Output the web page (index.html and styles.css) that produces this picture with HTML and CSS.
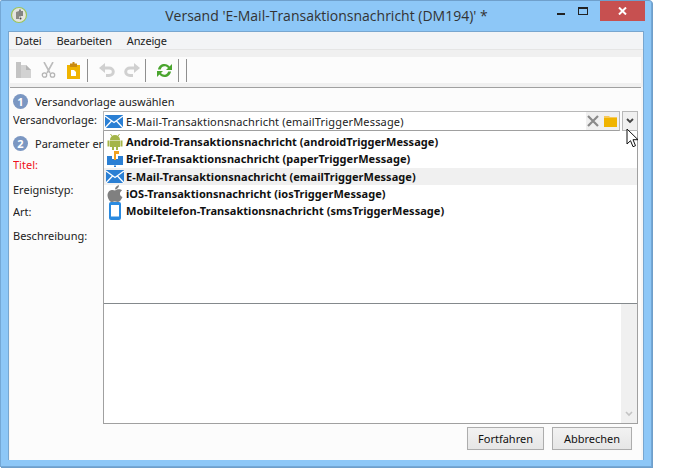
FILE: index.html
```html
<!DOCTYPE html>
<html lang="de">
<head>
<meta charset="utf-8">
<title>Versand</title>
<link rel="stylesheet" href="styles.css">
</head>
<body>
<div class="window">
  <header class="titlebar">
    <svg class="app-icon" width="18" height="18" viewBox="0 0 18 18"><circle cx="9" cy="9" r="7.500" fill="#e4e4df" stroke="#9cc45a" stroke-width="1.200"/><path d="M6 13V6l3-1v8z" fill="#8a8a86"/><path d="M10 3.500v7M12 5v5" stroke="#444" stroke-width="1.200" fill="none"/><circle cx="10.500" cy="12.500" r="1" fill="#444"/></svg>
    <h1 class="title">Versand 'E-Mail-Transaktionsnachricht (DM194)' *</h1>
    <div class="win-controls">
      <span class="win-btn win-min"><svg width="8" height="2" viewBox="0 0 8 2"><rect width="8" height="2" fill="#222"/></svg></span>
      <span class="win-btn win-max"><svg width="10" height="8" viewBox="0 0 10 8"><rect x=".5" y=".5" width="9" height="7" fill="none" stroke="#222"/><rect width="10" height="2" fill="#222"/></svg></span>
      <span class="win-close"><svg width="9" height="8" viewBox="0 0 9 8"><path d="M1 .5l7 7M8 .5l-7 7" stroke="#fff" stroke-width="2"/></svg></span>
    </div>
  </header>
  <div class="client">
    <nav class="menubar"><span>Datei</span><span>Bearbeiten</span><span>Anzeige</span></nav>
    <div class="toolbar-band">
      <div class="toolbar">
        <svg class="t-copy" width="15" height="16" viewBox="0 0 15 16"><path d="M0 0h5v16H0z" fill="#c4c4c4"/><path d="M5 3h5l5 5v8H5z" fill="#d2d2d2"/><path d="M10 3v5h5z" fill="#b4b4b4"/></svg>
        <svg class="t-cut" width="15" height="16" viewBox="0 0 15 16"><path d="M3 0l6 11M12 0L6 11" stroke="#bcbcbc" stroke-width="1.600" fill="none"/><circle cx="3.500" cy="13" r="2.200" fill="none" stroke="#b4b4b4" stroke-width="1.300"/><circle cx="11.500" cy="13" r="2.200" fill="none" stroke="#b4b4b4" stroke-width="1.300"/></svg>
        <svg class="t-paste" width="13" height="17" viewBox="0 0 13 17"><rect y="3" width="13" height="14" fill="#f0b400"/><path d="M3 3V1.500h2.500V0h2v1.500H10V5H3z" fill="#c98a10"/><path d="M4 8h3l2 2v4H4z" fill="#fff"/></svg>
        <span class="t-sep s1"></span>
        <svg class="t-undo" width="16" height="14" viewBox="0 0 16 14"><path d="M6 0v10L0 5z" fill="#d0d0d0"/><path d="M5 5h5a4 3.500 0 0 1 0 7.500H7" fill="none" stroke="#d0d0d0" stroke-width="3"/></svg>
        <svg class="t-redo" width="16" height="14" viewBox="0 0 16 14"><path d="M10 0v10l6-5z" fill="#d0d0d0"/><path d="M11 5H6a4 3.500 0 0 0 0 7.500h3" fill="none" stroke="#d0d0d0" stroke-width="3"/></svg>
        <span class="t-sep s2"></span>
        <svg class="t-refresh" width="15" height="15" viewBox="0 0 15 15"><path d="M1 6.500C1.500 3 4.200 1 7.500 1c2.200 0 3.900 1 5 2.500L15 1v6H9l2-2C10.200 3.800 9 3.300 7.500 3.300 5.800 3.300 4.300 4.500 3.800 6.500z" fill="#4aa52e"/><path d="M14 8.500C13.500 12 10.800 14 7.500 14c-2.200 0-3.900-1-5-2.500L0 14V8h6l-2 2c.8 1.200 2 1.700 3.500 1.700 1.700 0 3.200-1.200 3.700-3.200z" fill="#4aa52e"/></svg>
        <span class="t-sep s3"></span>
        <span class="t-sep s4"></span>
      </div>
    </div>
    <main class="content">
      <div class="step step-first"><span class="badge">1</span><span>Versandvorlage auswählen</span></div>
      <div class="form">
        <div class="labels">
          <div class="lab lab-vorlage">Versandvorlage:</div>
          <div class="step step-second"><span class="badge">2</span><span class="nowrap">Parameter erfassen</span></div>
          <div class="lab lab-titel">Titel:</div>
          <div class="lab lab-typ">Ereignistyp:</div>
          <div class="lab lab-art">Art:</div>
          <div class="lab lab-besch">Beschreibung:</div>
        </div>
        <div class="fields">
          <div class="combo-row">
            <div class="combo">
              <svg class="mail" width="18" height="13" viewBox="0 0 18 13"><rect width="18" height="13" fill="#2a7fd4"/><path d="M0 1l9 6.500L18 1M0 13l6.500-7M18 13l-6.500-7" stroke="#fff" stroke-width="1.300" fill="none"/></svg>
              <span class="combo-text">E-Mail-Transaktionsnachricht (emailTriggerMessage)</span>
              <div class="combo-tools">
                <svg width="12" height="12" viewBox="0 0 12 12"><path d="M1 1l10 10M11 1L1 11" stroke="#8a8a8a" stroke-width="2.200"/></svg>
                <svg width="13" height="11" viewBox="0 0 13 11"><path d="M0 0h5l1 1h7v2H0z" fill="#f7c95a"/><rect y="2" width="13" height="9" fill="#f0b400"/></svg>
              </div>
            </div>
            <div class="drop-btn"><svg width="8" height="6" viewBox="0 0 8 6"><path d="M1 1l3 3 3-3" stroke="#444" stroke-width="1.800" fill="none"/></svg></div>
          </div>
          <div class="pane">
            <ul class="list">
              <li><svg width="16" height="16" viewBox="0 0 16 16"><path d="M3 6a5 5 0 0 1 10 0z" fill="#a4b548"/><rect x="3" y="6.500" width="10" height="6.500" fill="#a4b548"/><rect x="0.500" y="6.500" width="2" height="6" fill="#a4b548"/><rect x="13.500" y="6.500" width="2" height="6" fill="#a4b548"/><rect x="5" y="13" width="2" height="3" fill="#a4b548"/><rect x="9" y="13" width="2" height="3" fill="#a4b548"/><path d="M5 2L3.500 0M11 2l1.500-2" stroke="#a4b548"/></svg>Android-Transaktionsnachricht (androidTriggerMessage)</li>
              <li><svg width="16" height="16" viewBox="0 0 16 16"><path d="M0 5h5v9H0zM11 5h5v9h-5zM5 8h6v6H5z" fill="#2a7fd4"/><path d="M7 0h5v3H9v6H7z" fill="#f0a020"/><rect x="7" y="14.500" width="2" height="1.500" fill="#2a7fd4"/></svg>Brief-Transaktionsnachricht (paperTriggerMessage)</li>
              <li class="selected"><svg width="18" height="13" viewBox="0 0 18 13"><rect width="18" height="13" fill="#2a7fd4"/><path d="M0 1l9 6.500L18 1M0 13l6.500-7M18 13l-6.500-7" stroke="#fff" stroke-width="1.300" fill="none"/></svg>E-Mail-Transaktionsnachricht (emailTriggerMessage)</li>
              <li><svg width="16" height="17" viewBox="0 0 16 17"><path d="M8 5.500C6.500 4.500 1 4 .5 10c0 3.500 2.500 7 4 7 1 0 2.500-.6 3.500-.6s2 .6 3 .6c1.500 0 3.500-2.500 4.500-5-3-1-3.500-5-.5-6.500-2-2-5-1-7 0z" fill="#808080"/><path d="M8 4.500c0-2 1.500-4 4-4.500 0 2.500-1.500 4-4 4.500z" fill="#808080"/></svg>iOS-Transaktionsnachricht (iosTriggerMessage)</li>
              <li><svg width="16" height="18" viewBox="0 0 16 18"><rect x="2" y="0" width="12" height="18" rx="2" fill="#2a8ae0"/><rect x="4" y="3" width="8" height="11.500" fill="#fff"/></svg>Mobiltelefon-Transaktionsnachricht (smsTriggerMessage)</li>
            </ul>
            <div class="lower">
              <div class="lower-blank"></div>
              <div class="scroll"><svg width="8" height="6" viewBox="0 0 8 6"><path d="M1 1l3 3 3-3" stroke="#c4c4c4" stroke-width="1.600" fill="none"/></svg></div>
            </div>
          </div>
          <div class="actions">
            <button class="btn btn-go">Fortfahren</button>
            <button class="btn btn-stop">Abbrechen</button>
          </div>
        </div>
      </div>
    </main>
  </div>
</div>
<svg class="cursor" width="15" height="21" viewBox="0 0 15 21"><path d="M1 1v15l3.500-3.300 2.500 6 2.500-1-2.500-6h5z" fill="#fff" stroke="#111" stroke-width="1"/></svg>
</body>
</html>
```
FILE: styles.css
```css
* { box-sizing: border-box; }
html, body { margin: 0; padding: 0; background: #fff; }
body { width: 680px; height: 476px; overflow: hidden; position: relative; font-family: "Noto Sans", "Liberation Sans", sans-serif; font-size: 11px; color: #222; }
.window { width: 652px; height: 467px; background: #8dc7f7; border: 1px solid #74a8d6; border-top-color: #6f9fcb; border-radius: 2px 3px 0 0; padding: 0 7px 6px 7px; display: flex; flex-direction: column; box-shadow: 1px 1px 0 #6f9fcb; }
.titlebar { height: 30px; display: flex; align-items: center; position: relative; flex: none; }
.app-icon { margin: -2px 0 0 2px; flex: none; }
.title { flex: 1; margin: -2px 0 0; font: 400 14px "Open Sans", sans-serif; color: #333; text-align: center; white-space: nowrap; padding-right: 19px; }
.win-controls { position: absolute; right: -1px; top: 0; display: flex; height: 20px; }
.win-btn { height: 20px; display: flex; justify-content: center; }
.win-min { width: 26px; padding-top: 12px; }
.win-max { width: 18px; padding-top: 6px; }
.win-close { width: 45px; margin-left: 8px; height: 20px; background: #c75050; display: flex; align-items: center; justify-content: center; }
.client { flex: 1; min-height: 0; background: #f6f6f6; border: 1px solid #78a6cf; border-bottom: 0; display: flex; flex-direction: column; }
.menubar { height: 18px; flex: none; background: #f3f4f6; border-bottom: 1px solid #e5e5e5; display: flex; padding-left: 6px; gap: 15px; align-items: center; color: #222; letter-spacing: -.15px; }
.toolbar-band { flex: none; height: 37px; background: #f0f0f0; padding: 7px 2px 3px 1px; }
.toolbar { height: 26px; background: #fcfcfc; display: flex; align-items: center; padding-left: 6px; }
.t-cut { margin-left: 10px; }
.t-paste { margin-left: 11px; }
.t-sep { width: 1px; height: 23px; background: #8f8f8f; flex: none; }
.s1 { margin-left: 7px; }
.t-undo { margin-left: 11px; }
.t-redo { margin-left: 9px; }
.s2 { margin-left: 5px; }
.t-refresh { margin-left: 11px; }
.s3 { margin-left: 6px; }
.s4 { margin-left: 7px; }
.content { flex: 1; min-height: 0; margin: 0 2px 0 1px; border-top: 1px solid #a0a0a0; background: #fcfcfc; display: flex; flex-direction: column; padding: 5px 3px 0 3px; }
.step { display: flex; align-items: center; gap: 7px; height: 16px; color: #222; white-space: nowrap; }
.badge { width: 15px; height: 15px; border-radius: 50%; background: #7b97c2; color: #fff; font-weight: 700; font-size: 11px; display: flex; align-items: center; justify-content: center; flex: none; }
.form { flex: 1; min-height: 0; display: flex; }
.labels { width: 90px; flex: none; overflow: hidden; }
.lab { height: 16px; display: flex; align-items: center; white-space: nowrap; }
.lab-vorlage { margin-top: 2px; }
.step-second { margin-top: 8px; }
.lab-titel { margin-top: 5px; color: #f01020; }
.lab-typ { margin-top: 9px; }
.lab-art { margin-top: 6px; }
.lab-besch { margin-top: 8px; }
.nowrap { white-space: nowrap; }
.fields { flex: 1; min-width: 0; display: flex; flex-direction: column; }
.combo-row { display: flex; gap: 2px; height: 20px; flex: none; margin-top: 2px; }
.combo { flex: 1; min-width: 0; background: #fff; border: 1px solid #b8b8b8; border-bottom-color: #a0a0a0; display: flex; align-items: center; padding-left: 1px; }
.mail { margin-right: 3px; flex: none; }
.combo-text { flex: 1; white-space: nowrap; letter-spacing: .16px; }
.combo-tools { flex: none; width: 33px; height: 18px; background: #f0f0f0; display: flex; align-items: center; gap: 5px; padding-left: 1px; }
.drop-btn { width: 16px; flex: none; background: #f0f0f0; border: 1px solid #b8b8b8; display: flex; align-items: center; justify-content: center; }
.pane { flex: none; height: 293px; border: 1px solid #a0a0a0; border-top: 0; background: #fff; display: flex; flex-direction: column; }
.list { list-style: none; margin: 0; padding: 2px 0 0; height: 173px; flex: none; border-bottom: 1px solid #84898c; }
.list li { height: 17.25px; display: flex; align-items: center; gap: 2px; padding-left: 2px; font-weight: 700; color: #111; white-space: nowrap; letter-spacing: .04px; }
.list svg { flex: none; width: 18px; }
.list li.selected { background: #f0f0f0; }
.lower { flex: 1; display: flex; min-height: 0; }
.lower-blank { flex: 1; }
.scroll { width: 16px; background: #f0f0f0; display: flex; align-items: flex-end; justify-content: center; padding-bottom: 6px; }
.actions { display: flex; justify-content: flex-end; gap: 8px; margin-top: 3px; padding-right: 6px; }
.btn { height: 23px; padding: 0; font: 11px "Noto Sans", sans-serif; color: #111; background: linear-gradient(#f2f2f2, #e6e6e6); border: 1px solid #adadad; box-shadow: 0 0 0 1px #fbfbfb; }
.btn-go { width: 77px; }
.btn-stop { width: 80px; }
.cursor { position: absolute; left: 626px; top: 128px; }
```
